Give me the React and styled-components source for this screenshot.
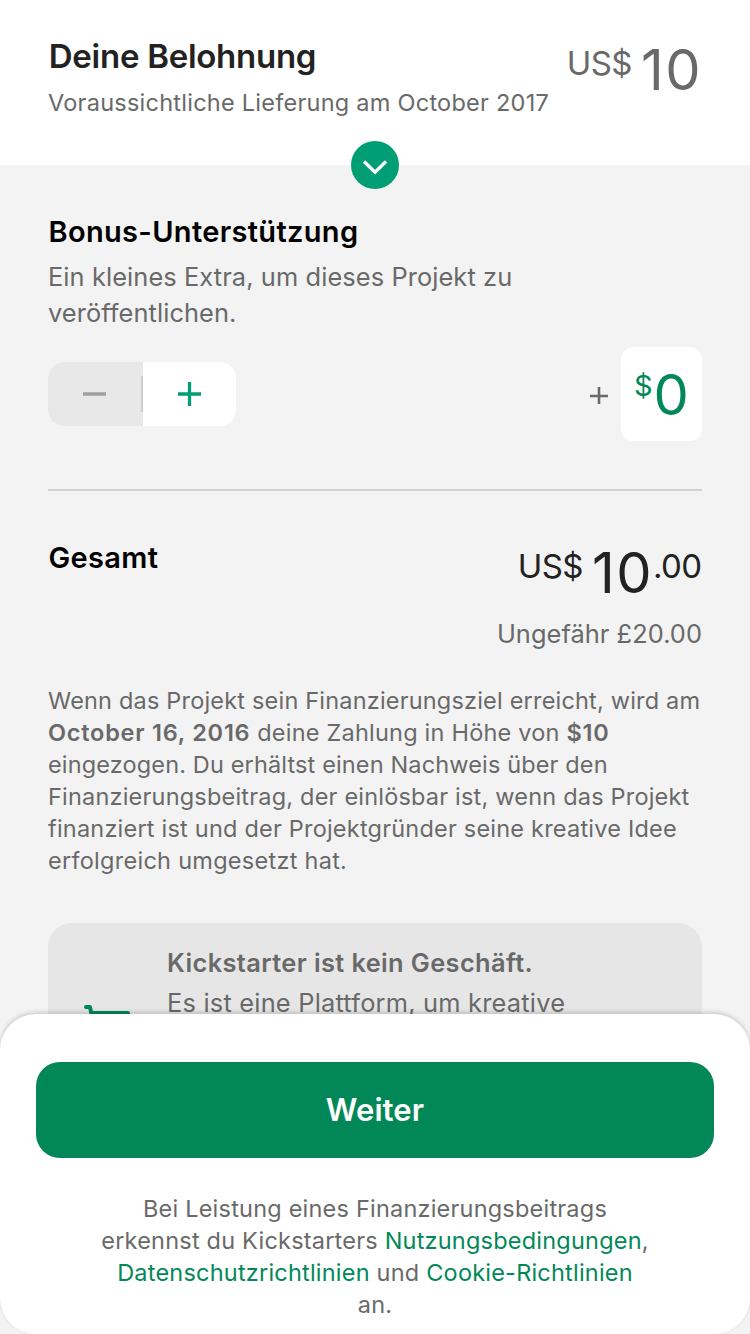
import React from 'react';
import styled, { createGlobalStyle } from 'styled-components';

const Global = createGlobalStyle`
  * { box-sizing: border-box; margin: 0; }
  body { margin: 0; background: #f3f3f3; font-family: Inter, sans-serif; color: #696969; }
  b { font-weight: 600; }
`;
const Screen = styled.main`position: relative; height: 1334px; overflow: hidden; background: #f3f3f3;`;
const Header = styled.header`
  position: relative; height: 165px; padding: 36px 48px 0 48px; background: #fff;
  display: flex; justify-content: space-between;
`;
const Title = styled.h1`padding-left: 0.8px; font-size: 33px; line-height: 41px; margin-bottom: 1px; font-weight: 600; color: #222; white-space: nowrap; letter-spacing: -0.27px;`;
const Heading = styled.h2`padding-left: 0.5px; font-size: 29px; line-height: 36px; font-weight: 600; color: #000; white-space: nowrap; letter-spacing: 0.33px;`;
const Text = styled.p`
  font-size: ${p => p.$size || 23.5}px; line-height: ${p => p.$lh || 32}px; letter-spacing: ${p => p.$ls || 0}px;
  margin-top: ${p => p.$mt || 0}px; white-space: nowrap; text-align: ${p => p.$align || 'left'};
`;
const Line = styled.span`display: block; letter-spacing: ${p => p.$ls || 0}px;`;
const Bold = styled.b`letter-spacing: ${p => p.$ls || 0}px;`;
const Money = styled.div`
  display: flex; align-items: flex-start; white-space: nowrap; color: ${p => p.$color || '#696969'};
  font-size: 56px; line-height: 68px; letter-spacing: 1.5px;
`;
const Small = styled.span`font-size: ${p => p.$size || 33}px; line-height: 42px; margin: ${p => p.$m || 0}; letter-spacing: -0.6px;`;
const Toggle = styled.button`
  position: absolute; left: 351px; top: 141px; width: 48px; height: 48px; border: 0; padding: 0;
  border-radius: 50%; background: #009e74;
`;
const Content = styled.section`padding: 49px 48px 0;`;
const BonusRow = styled.div`display: flex; justify-content: space-between; align-items: center; height: 94px; margin-top: 16px;`;
const Stepper = styled.div`display: flex; width: 188px; height: 64px; border-radius: 16px; overflow: hidden; background: #fff;`;
const Step = styled.button`width: ${p => p.$off ? 95 : 93}px; border: 0; padding: 0; background: ${p => p.$off ? '#e8e8e8' : '#fff'};`;
const Amount = styled.div`display: flex; align-items: center; gap: 12px;`;
const Box = styled.div`width: 81px; height: 94px; border-radius: 12px; background: #fff; padding: 14px 0 0 13px;`;
const Rule = styled.hr`border: 0; height: 2px; background: #d1d1d1; margin-top: 48px;`;
const Total = styled.div`display: flex; justify-content: space-between; margin-top: 49px; height: 78px;`;
const TotalAmount = styled.div`margin: -1px 0.5px 0 0;`;
const Notice = styled.div`
  height: 170px; margin-top: 46px; border-radius: 24px; background: #e6e6e6; display: flex; padding: 24px 0 0 36px;
`;
const NoticeCopy = styled.div`margin-left: 35px;`;
const Sheet = styled.footer`
  position: absolute; left: 0; right: 0; top: 1014px; height: 320px; padding: 48px 36px 0;
  border-radius: 36px; background: #fff; box-shadow: 0 -2px 4px rgba(0,0,0,.16);
`;
const Primary = styled.button`
  display: block; width: 100%; height: 96px; border: 0; border-radius: 24px; background: #028858; color: #fff;
  padding: 0; font: 600 31px/38px Inter, sans-serif; letter-spacing: 0.1px;
`;
const Link = styled.a`color: #028858;`;
const Svg = styled.svg`display: block;`;

export default function App() {
  return <><Global /><Screen>
    <Header>
      <div>
        <Title>Deine Belohnung</Title>
        <Text $mt={10} $ls={0.25}>Voraussichtliche Lieferung am October 2017</Text>
      </div>
      <Money><Small $m="6px 9px 0 0">US$</Small>10</Money>
      <Toggle aria-label="Details">
        <Svg width="48" height="48" fill="none" stroke="#fff" strokeWidth="3.3"><path d="M13 20.5L24 31.3L35 20.5" /></Svg>
      </Toggle>
    </Header>
    <Content>
      <Heading>Bonus-Unterstützung</Heading>
      <Text $size={25.4} $lh={36} $mt={9} $ls={0.09}>Ein kleines Extra, um dieses Projekt zu<br />veröffentlichen.</Text>
      <BonusRow>
        <Stepper>
          <Step $off aria-label="Weniger"><Svg width="95" height="64"><path d="M35 32H58" stroke="#a0a0a0" strokeWidth="3.5" /><path d="M94 14V50" stroke="#cecece" strokeWidth="2" /></Svg></Step>
          <Step aria-label="Mehr"><Svg width="93" height="64"><path d="M35 32H58M46.5 20V44" stroke="#009e74" strokeWidth="3.3" /></Svg></Step>
        </Stepper>
        <Amount>
          <Svg width="20" height="20"><path d="M1 12H19M10 3V21" stroke="#696969" strokeWidth="2.6" /></Svg>
          <Box><Money $color="#028858"><Small $size={29} $m="4px 1.5px 0 0">$</Small>0</Money></Box>
        </Amount>
      </BonusRow>
      <Rule />
      <Total>
        <Heading>Gesamt</Heading>
        <TotalAmount><Money $color="#222"><Small $m="6px 9px 0 0">US$</Small>10<Small $m="6px 0 0">.00</Small></Money></TotalAmount>
      </Total>
      <Text $size={25.4} $align="right" $ls={0.05}>Ungefähr £20.00</Text>
      <Text $mt={35}>
        <Line $ls={0.19}>Wenn das Projekt sein Finanzierungsziel erreicht, wird am</Line>
        <Line $ls={0.22}><Bold $ls={0.76}>October 16, 2016</Bold> deine Zahlung in Höhe von <Bold $ls={0.7}>$10</Bold></Line>
        <Line $ls={0.14}>eingezogen. Du erhältst einen Nachweis über den</Line>
        <Line $ls={0.2}>Finanzierungsbeitrag, der einlösbar ist, wenn das Projekt</Line>
        <Line $ls={0.21}>finanziert ist und der Projektgründer seine kreative Idee</Line>
        <Line $ls={0.27}>erfolgreich umgesetzt hat.</Line>
      </Text>
      <Notice>
        <Svg width="48" height="90" fill="none" stroke="#028858" strokeWidth="4" strokeLinecap="round" strokeLinejoin="round"><path d="M2 60H6L12 90M8 66H44L40 88" /></Svg>
        <NoticeCopy>
          <Text $size={25.4}><Bold $ls={0.38}>Kickstarter ist kein Geschäft.</Bold></Text>
          <Text $size={25.4} $mt={8} $ls={0.21}>Es ist eine Plattform, um kreative</Text>
        </NoticeCopy>
      </Notice>
    </Content>
    <Sheet>
      <Primary>Weiter</Primary>
      <Text $mt={35} $align="center" $ls={0.21}>Bei Leistung eines Finanzierungsbeitrags<br />erkennst du Kickstarters <Link>Nutzungsbedingungen</Link>,<br /><Link>Datenschutzrichtlinien</Link> und <Link>Cookie-Richtlinien</Link><br />an.</Text>
    </Sheet>
  </Screen></>;
}
